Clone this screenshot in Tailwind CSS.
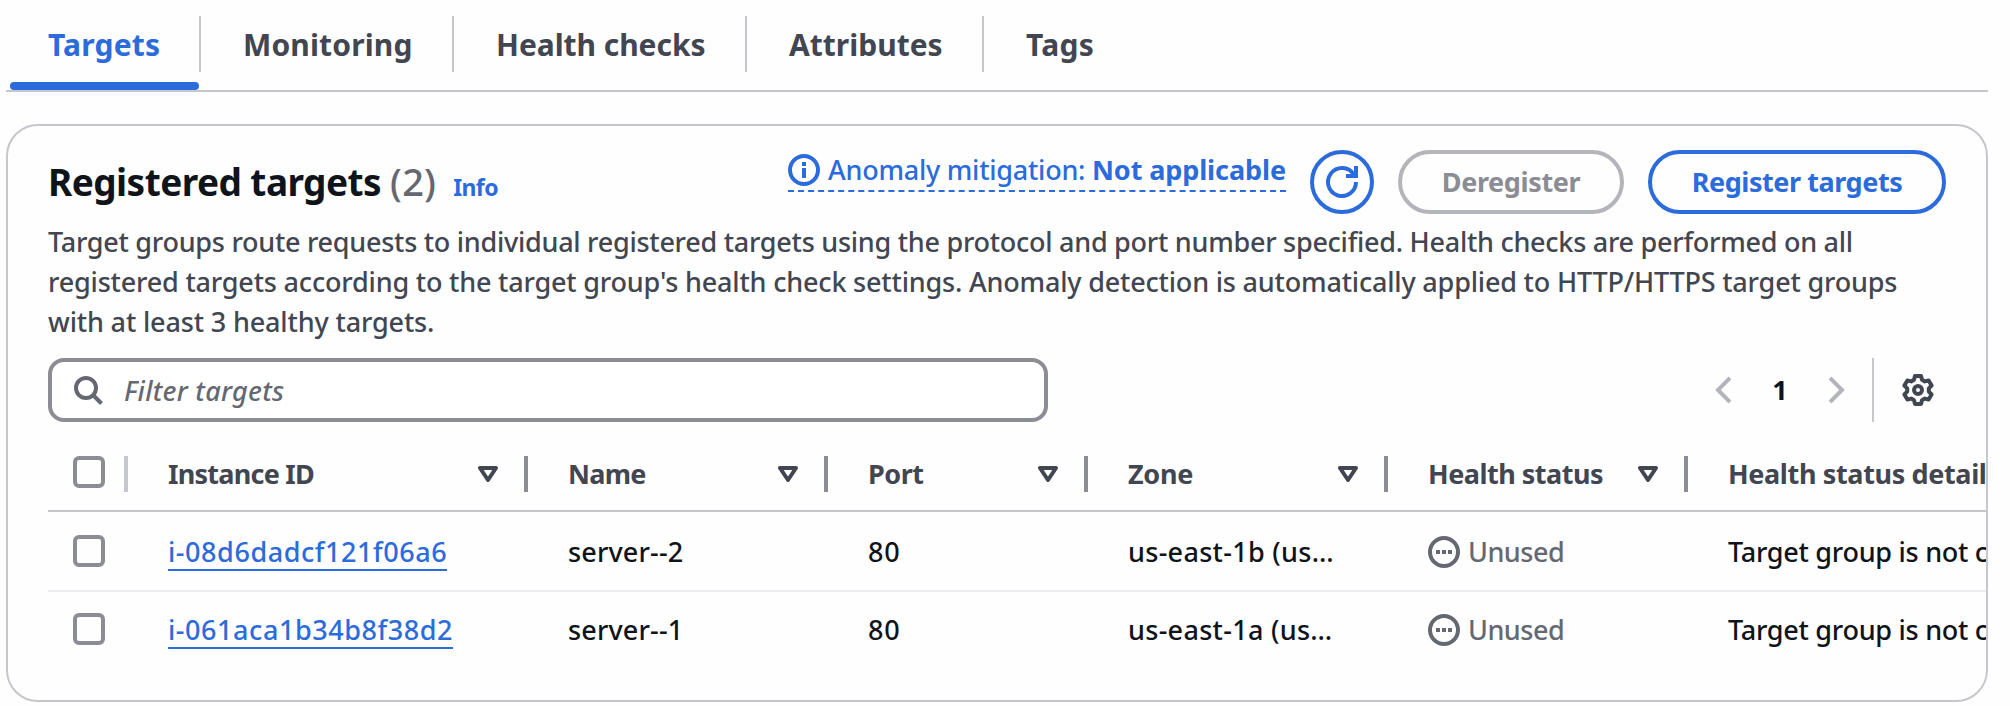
<!DOCTYPE html>
<html lang="en">
<head>
<meta charset="utf-8">
<title>Registered targets</title>
<script src="https://cdn.jsdelivr.net/npm/@tailwindcss/browser@4"></script>
</head>
<body class="h-[706px] w-[2010px] overflow-hidden bg-[#fefefe] pl-1.5 font-['Noto_Sans',sans-serif] text-[27px] leading-10 font-medium text-[#0f141a]">
<svg class="hidden">
  <symbol id="sort" viewBox="0 0 20 16"><path d="M2 2h16l-8 12z" fill="none" stroke="currentColor" stroke-width="4" stroke-linejoin="round"/></symbol>
  <symbol id="pending" viewBox="0 0 32 32"><circle cx="16" cy="16" r="14" fill="none" stroke="currentColor" stroke-width="4"/><path d="M8 14h4v4H8zM14 14h4v4h-4zM20 14h4v4h-4z" fill="currentColor"/></symbol>
</svg>

<nav class="flex h-[92px] w-[1982px] border-b-2 border-[#c6c6cd] text-[30px] font-bold text-[#424650]">
  <div class="relative flex w-[195px] pt-4 text-[#2b6bdb]">
    <div class="h-14 w-full border-r-2 border-[#c6c6cd] pl-[42px] leading-[58px] tracking-[0.2px]">Targets</div>
    <div class="absolute bottom-0 left-1 h-2 w-[189px] rounded-[4px] bg-[#2b6bdb]"></div>
  </div>
  <div class="w-[253px] pt-4"><div class="h-14 border-r-2 border-[#c6c6cd] pl-[42px] leading-[58px] tracking-[0.15px]">Monitoring</div></div>
  <div class="w-[293px] pt-4"><div class="h-14 border-r-2 border-[#c6c6cd] pl-[42px] leading-[58px] tracking-[-0.05px]">Health checks</div></div>
  <div class="w-[237px] pt-4"><div class="h-14 border-r-2 border-[#c6c6cd] pl-[42px] leading-[58px]">Attributes</div></div>
  <div class="pt-4"><div class="pl-[42px] leading-[58px] tracking-[0.3px]">Tags</div></div>
</nav>

<main class="mt-8 h-[578px] w-[1982px] overflow-hidden rounded-[32px] border-2 border-[#c6c6cd] pt-6 pl-10">
  <header class="flex h-16 w-[1898px] items-center">
    <div class="flex items-baseline pt-1">
      <h2 class="text-[37px] font-bold tracking-[-0.55px] whitespace-nowrap">Registered targets <span class="text-[38px] font-medium tracking-[0.2px] text-[#656871]">(2)</span></h2>
      <a class="ml-[17px] text-[23px] font-bold tracking-[-0.6px] text-[#2b6bdb]">Info</a>
    </div>
    <div class="ml-auto flex gap-6">
      <div class="flex h-[42px] w-[498px] items-center border-b-2 border-dashed border-[#2b6bdb] whitespace-nowrap text-[#2b6bdb]">
        <svg class="mr-2 size-8" viewBox="0 0 32 32"><circle cx="16" cy="16" r="14" fill="none" stroke="currentColor" stroke-width="4"/><path d="M14 8h4v4h-4zM14 14h4v10h-4z" fill="currentColor"/></svg>
        <span class="tracking-[-0.24px]">Anomaly mitigation: <b class="tracking-[-0.1px]">Not applicable</b></span>
      </div>
      <button class="flex size-16 items-center justify-center rounded-full border-4 border-[#2b6bdb] text-[#2b6bdb]">
        <svg class="size-8" viewBox="0 0 32 32" fill="none" stroke="currentColor" stroke-width="4"><path d="M30 16a14 14 0 1 1-2.2-7.5l1.2 1.6M30 0v10H20"/></svg>
      </button>
      <button class="h-16 w-[226px] rounded-full border-4 border-[#b4b4bb] font-bold tracking-[-0.37px] text-[#8c8c94]">Deregister</button>
      <button class="h-16 w-[298px] rounded-full border-4 border-[#2b6bdb] font-bold tracking-[-0.44px] text-[#2b6bdb]">Register targets</button>
    </div>
  </header>

  <p class="mt-2 h-[120px] whitespace-nowrap text-[#424650]"><span class="tracking-[-0.265px]">Target groups route requests to individual registered targets using the protocol and port number specified. Health checks are performed on all</span><br><span class="tracking-[-0.188px]">registered targets according to the target group's health check settings. Anomaly detection is automatically applied to HTTP/HTTPS target groups</span><br><span class="tracking-[-0.15px]">with at least 3 healthy targets.</span></p>

  <div class="mt-4 flex h-16 w-[1898px] items-center">
    <div class="flex h-16 w-[1000px] items-center rounded-[16px] border-4 border-[#8c8c94] bg-white pl-5 text-[#656871]">
      <svg class="size-8" viewBox="0 0 32 32" fill="none" stroke="currentColor" stroke-width="4"><circle cx="14" cy="14" r="10"/><path d="m21 21 8.5 8.5"/></svg>
      <span class="ml-5 pt-0.5 tracking-[0.28px] italic">Filter targets</span>
    </div>
    <div class="ml-auto flex h-16 items-center">
      <svg class="h-8 w-4 text-[#b4b4bb]" viewBox="0 0 16 32" fill="none" stroke="currentColor" stroke-width="4"><path d="M15 4 3 16l12 12"/></svg>
      <span class="w-[98px] text-center font-bold">1</span>
      <svg class="h-8 w-4 text-[#b4b4bb]" viewBox="0 0 16 32" fill="none" stroke="currentColor" stroke-width="4"><path d="m1 4 12 12L1 28"/></svg>
      <div class="ml-[27px] h-16 w-0.5 bg-[#c6c6cd]"></div>
      <svg class="mr-3 ml-7 size-8 text-[#424650]" viewBox="-16 -16 32 32" fill="none" stroke="currentColor" stroke-width="4" stroke-linejoin="round"><path d="M-3-14H3L4-10.2 6.8-8.6 10.6-9.6 13.6-4.4 10.8-1.6V1.6L13.6 4.4 10.6 9.6 6.8 8.6 4 10.2 3 14H-3L-4 10.2-6.8 8.6-10.6 9.6-13.6 4.4-10.8 1.6V-1.6L-13.6-4.4-10.6-9.6-6.8-8.6-4-10.2Z"/><circle r="4"/></svg>
    </div>
  </div>

  <section class="mt-3 w-[2600px] whitespace-nowrap">
    <div class="flex h-[78px] border-b-2 border-[#c6c6cd] pt-[22px] font-bold text-[#424650]">
      <div class="flex h-9 w-20 shrink-0 justify-between border-r-4 border-[#c6c6cd] pl-[25px]"><span class="size-8 rounded-[6px] border-4 border-[#8c8c94]"></span></div>
      <div class="flex h-9 w-[400px] shrink-0 items-center justify-between border-r-4 border-[#8c8c94] pr-[26px] pl-10 tracking-[-0.76px]">Instance ID<svg class="h-4 w-5"><use href="#sort"/></svg></div>
      <div class="flex h-9 w-[300px] shrink-0 items-center justify-between border-r-4 border-[#8c8c94] pr-[26px] pl-10 tracking-[-0.7px]">Name<svg class="h-4 w-5"><use href="#sort"/></svg></div>
      <div class="flex h-9 w-[260px] shrink-0 items-center justify-between border-r-4 border-[#8c8c94] pr-[26px] pl-10 tracking-[-0.5px]">Port<svg class="h-4 w-5"><use href="#sort"/></svg></div>
      <div class="flex h-9 w-[300px] shrink-0 items-center justify-between border-r-4 border-[#8c8c94] pr-[26px] pl-10 tracking-[-0.3px]">Zone<svg class="h-4 w-5"><use href="#sort"/></svg></div>
      <div class="flex h-9 w-[300px] shrink-0 items-center justify-between border-r-4 border-[#8c8c94] pr-[26px] pl-10 tracking-[-0.5px]">Health status<svg class="h-4 w-5"><use href="#sort"/></svg></div>
      <div class="flex h-9 items-center pl-10 tracking-[-0.36px]">Health status details</div>
    </div>
    <div class="flex h-20 items-center border-b-2 border-[#ebebf0]">
      <div class="w-20 shrink-0 pl-[25px]"><span class="block size-8 rounded-[6px] border-4 border-[#8c8c94]"></span></div>
      <div class="w-[400px] shrink-0 pl-10"><a class="mt-0.5 block h-[38px] w-fit border-b-2 border-[#2b6bdb] leading-[37px] tracking-[0.56px] text-[#2b6bdb]">i-08d6dadcf121f06a6</a></div>
      <div class="w-[300px] shrink-0 pt-0.5 pl-10 tracking-[0.15px]">server--2</div>
      <div class="w-[260px] shrink-0 pt-0.5 pl-10 tracking-[0.9px]">80</div>
      <div class="w-[300px] shrink-0 pt-0.5 pl-10 tracking-[0.3px]">us-east-1b (us…</div>
      <div class="flex w-[300px] shrink-0 items-center gap-2 pt-0.5 pl-10 tracking-[-0.5px] text-[#656871]"><svg class="size-8"><use href="#pending"/></svg>Unused</div>
      <div class="pt-0.5 pl-10 tracking-[-0.27px]">Target group is not configured to use this target</div>
    </div>
    <div class="flex h-[74px] items-center">
      <div class="w-20 shrink-0 pl-[25px]"><span class="block size-8 rounded-[6px] border-4 border-[#8c8c94]"></span></div>
      <div class="w-[400px] shrink-0 pl-10"><a class="mt-0.5 block h-[38px] w-fit border-b-2 border-[#2b6bdb] leading-[37px] tracking-[0.56px] text-[#2b6bdb]">i-061aca1b34b8f38d2</a></div>
      <div class="w-[300px] shrink-0 pt-0.5 pl-10 tracking-[0.15px]">server--1</div>
      <div class="w-[260px] shrink-0 pt-0.5 pl-10 tracking-[0.9px]">80</div>
      <div class="w-[300px] shrink-0 pt-0.5 pl-10 tracking-[0.3px]">us-east-1a (us…</div>
      <div class="flex w-[300px] shrink-0 items-center gap-2 pt-0.5 pl-10 tracking-[-0.5px] text-[#656871]"><svg class="size-8"><use href="#pending"/></svg>Unused</div>
      <div class="pt-0.5 pl-10 tracking-[-0.27px]">Target group is not configured to use this target</div>
    </div>
  </section>
</main>
</body>
</html>
